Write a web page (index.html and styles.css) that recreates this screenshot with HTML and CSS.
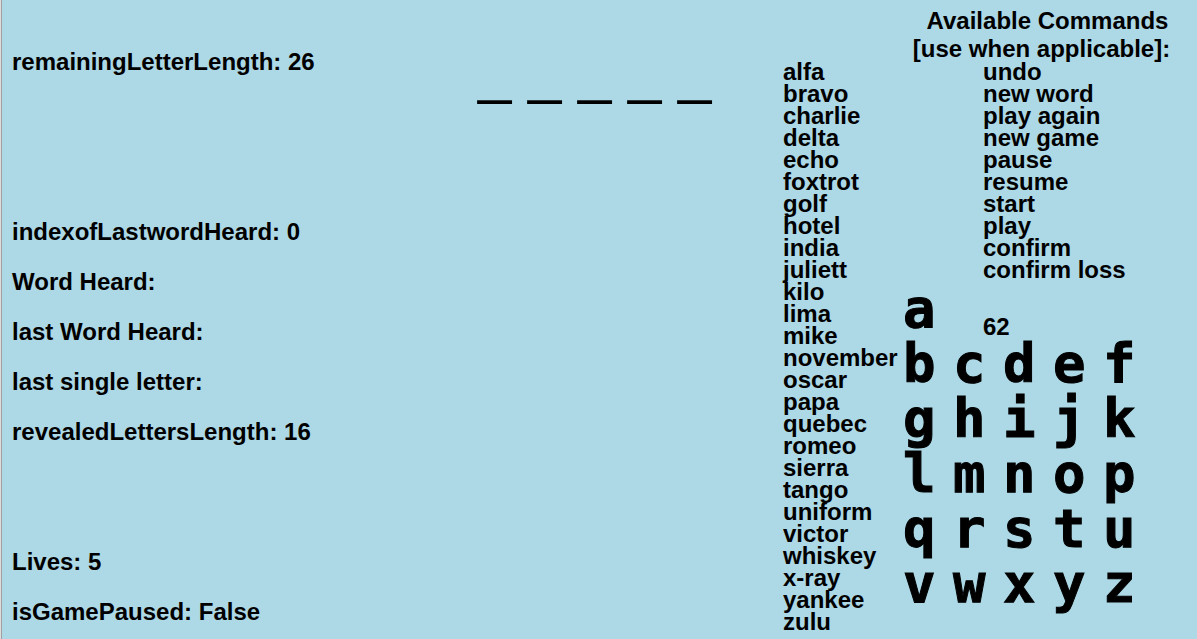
FILE: index.html
```html
<!DOCTYPE html>
<html lang="en">
<head>
<meta charset="utf-8">
<title>Word Game</title>
<link rel="stylesheet" href="styles.css">
</head>
<body>
<main class="game">
  <section class="status">
    <div class="group"><p>remainingLetterLength: 26</p></div>
    <div class="group heard">
      <p>indexofLastwordHeard: 0</p>
      <p>Word Heard:</p>
      <p>last Word Heard:</p>
      <p>last single letter:</p>
      <p>revealedLettersLength: 16</p>
    </div>
    <div class="group lives">
      <p>Lives: 5</p>
      <p>isGamePaused: False</p>
    </div>
  </section>
  <section class="blanks"><span>_</span><span>_</span><span>_</span><span>_</span><span>_</span></section>
  <section class="vocabulary">
    <ul class="words">
      <li>alfa</li><li>bravo</li><li>charlie</li><li>delta</li><li>echo</li><li>foxtrot</li><li>golf</li><li>hotel</li><li>india</li><li>juliett</li><li>kilo</li><li>lima</li><li>mike</li><li>november</li><li>oscar</li><li>papa</li><li>quebec</li><li>romeo</li><li>sierra</li><li>tango</li><li>uniform</li><li>victor</li><li>whiskey</li><li>x-ray</li><li>yankee</li><li>zulu</li>
    </ul>
    <div class="side">
      <h1 class="title"><span class="first">Available Commands</span><span>[use when applicable]:</span></h1>
      <ul class="commands">
        <li>undo</li><li>new word</li><li>play again</li><li>new game</li><li>pause</li><li>resume</li><li>start</li><li>play</li><li>confirm</li><li>confirm loss</li>
      </ul>
      <div class="letters">
        <span>a</span><span class="count">62</span>
        <span>b</span><span>c</span><span>d</span><span>e</span><span>f</span>
        <span>g</span><span>h</span><span>i</span><span>j</span><span>k</span>
        <span>l</span><span>m</span><span>n</span><span>o</span><span>p</span>
        <span>q</span><span>r</span><span>s</span><span>t</span><span>u</span>
        <span>v</span><span>w</span><span>x</span><span>y</span><span>z</span>
      </div>
    </div>
  </section>
</main>
</body>
</html>
```
FILE: styles.css
```css
* {
  box-sizing: border-box;
}

body {
  margin: 0;
  background: #add8e6;
  color: #000;
  font: bold 24px/22px "Liberation Sans", Arial, sans-serif;
  border-left: 1px solid #dcdcdc;
}

p, ul, h1 {
  margin: 0;
  padding: 0;
  list-style: none;
  font: inherit;
}

.game {
  display: flex;
  min-height: 100vh;
  border-left: 1px solid #a0a0a0;
}

.status {
  flex: 1;
  padding: 37px 0 0 10px;
  line-height: 50px;
  white-space: nowrap;
}

.status .group:last-child {
  height: 100px;
}

.heard {
  margin-top: 120px;
}

.lives {
  margin-top: 80px;
}

.blanks {
  display: grid;
  grid-template-columns: repeat(5, 50px);
  align-content: start;
  padding: 47px 55px 0 0;
  font: 60px/50px "Liberation Sans", Arial, sans-serif;
}

.vocabulary {
  display: flex;
}

.words {
  width: 120px;
  padding-top: 61px;
  line-height: 22px;
}

.side {
  width: 294px;
  padding-top: 7px;
}

.title {
  width: 277px;
  height: 54px;
  text-align: center;
  line-height: 28px;
}

.title span {
  display: block;
}

.title .first {
  padding-left: 12px;
}

.commands {
  padding-left: 80px;
}

.letters {
  display: grid;
  grid-template-columns: repeat(5, 50px);
  font: bold 54px/55px "DejaVu Sans Mono", monospace;
  -webkit-text-stroke: 1px #000;
}

.letters .count {
  grid-column: 2 / 6;
  height: 55px;
  padding: 18px 0 0 30px;
  font: bold 24px/55px "Liberation Sans", Arial, sans-serif;
  -webkit-text-stroke: 0;
}
```
